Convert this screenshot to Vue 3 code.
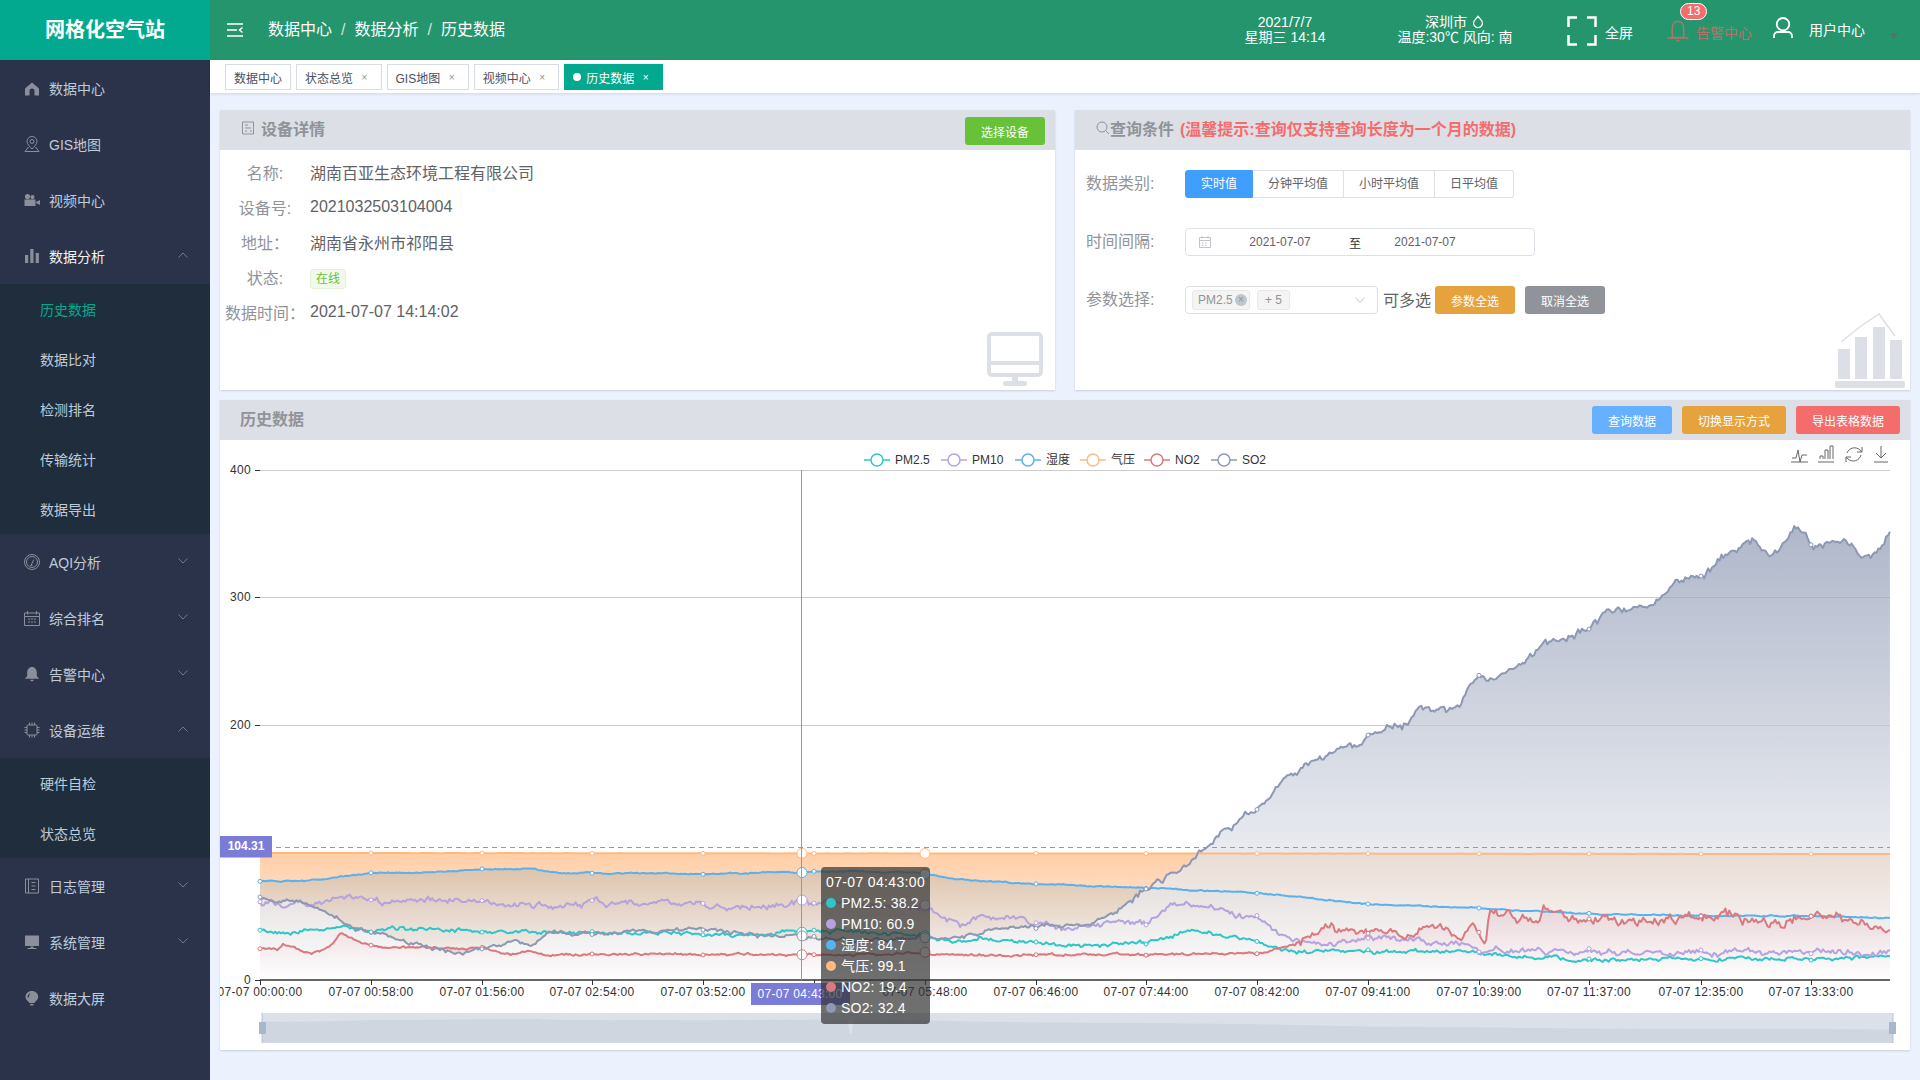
<script setup>
const menu = [
  { name: '数据中心', icon: 'home' },
  { name: 'GIS地图', icon: 'pin' },
  { name: '视频中心', icon: 'video' },
  {
    name: '数据分析', icon: 'bars', open: true, bright: true,
    children: ['历史数据', '数据比对', '检测排名', '传输统计', '数据导出'],
  },
  { name: 'AQI分析', icon: 'gauge', arrow: true },
  { name: '综合排名', icon: 'calendar', arrow: true },
  { name: '告警中心', icon: 'bell', arrow: true },
  {
    name: '设备运维', icon: 'chip', open: true,
    children: ['硬件自检', '状态总览'],
  },
  { name: '日志管理', icon: 'book', arrow: true },
  { name: '系统管理', icon: 'monitor', arrow: true },
  { name: '数据大屏', icon: 'bulb' },
]

const icons = {
  home: { fill: 'M8 2.500 15 8.500V15.500H10.500V11a2.500 2.500 0 0 0-5 0V15.500H1V8.500z' },
  pin: { line: 'M8 .5a5 5 0 0 1 5 5C13 8.300 10 10.800 8 13 6 10.800 3 8.300 3 5.500A5 5 0 0 1 8 .5zM8 3.500a2 2 0 1 0 0 4 2 2 0 0 0 0-4zM4.500 11 1 15.500h14L11.500 11' },
  video: { fill: 'M.5 7.500h11V14H.5zM12 10l4-2v5l-4-2zM3.500 2a2.600 2.600 0 1 1 0 5.200 2.600 2.600 0 0 1 0-5.200zM8.500 3a2.100 2.100 0 1 1 0 4.200 2.100 2.100 0 0 1 0-4.200z' },
  bars: { fill: 'M1 7h3.200v8H1zM6.300 1h3.200v14H6.300zM11.700 5h3.200v10h-3.200z' },
  gauge: { line: 'M8 .5a7.500 7.500 0 1 0 0 15 7.500 7.500 0 0 0 0-15zM8 2.500a5.500 5.500 0 1 0 0 11 5.500 5.500 0 0 0 0-11zM7 11.500 9.800 5.500M6.500 11.500h2' },
  calendar: { line: 'M.5 3h15v12.500H.5zM.5 6.500h15M3.500 1v3.500M12.500 1v3.500M4 9h2M7 9h2M10 9h2M4 12h2M7 12h2M10 12h2' },
  bell: { fill: 'M8 1c3 0 4.800 2.600 4.800 5.500V10l2.400 2.800H.8L3.200 10V6.500C3.200 3.600 5 1 8 1zM6.300 13.800h3.400a1.700 1.700 0 0 1-3.400 0z' },
  chip: { line: 'M4 3h8a1 1 0 0 1 1 1v8a1 1 0 0 1-1 1H4a1 1 0 0 1-1-1V4a1 1 0 0 1 1-1zM.5 5.500H3M.5 8H3M.5 10.500H3M13 5.500h2.500M13 8h2.500M13 10.500h2.500M5.500.5V3M8 .5V3M10.500.5V3M5.500 13v2.500M8 13v2.500M10.500 13v2.500' },
  book: { line: 'M1.500 1h13v14h-13zM4.500 1v14M7.500 4.500h4M7.500 8h4M7.500 11.500h4' },
  monitor: { fill: 'M1 1.500h14V12H1zM6.500 12.500h3V14h3v1h-9v-1h3z' },
  bulb: { fill: 'M7.800 1c3.700 0 6.400 2.600 6.400 5.800 0 2.400-1.700 4-3.200 5.200l-.5 1H5.300l-.5-1C3.300 10.800 1.500 9.200 1.500 6.800 1.500 3.600 4.200 1 7.800 1zM3.700 7.500c-.2-2 1-3.800 3-4.500-1 1.300-1.700 2.700-1.800 4.500zM5.800 14h4l-.6 1.500H6.400z' },
}

const tabs = [
  { name: '数据中心' },
  { name: '状态总览', close: true },
  { name: 'GIS地图', close: true },
  { name: '视频中心', close: true },
  { name: '历史数据', close: true, active: true },
]

const detailRows = [
  { label: '名称:', value: '湖南百亚生态环境工程有限公司' },
  { label: '设备号:', value: '2021032503104004' },
  { label: '地址：', value: '湖南省永州市祁阳县' },
  { label: '状态:', tag: '在线' },
  { label: '数据时间：', value: '2021-07-07 14:14:02' },
]

const dataTypes = ['实时值', '分钟平均值', '小时平均值', '日平均值']

// chart coordinates are page pixels, the svg viewBox starts at the panel corner
const plotLeft = 260
const plotRight = 1890
const plotBottom = 980
const minuteStep = 1.913

const legend = [
  { name: 'PM2.5', x: 864, color: '#2ec7c9' },
  { name: 'PM10', x: 941, color: '#b6a2de' },
  { name: '湿度', x: 1015, color: '#5ab1ef' },
  { name: '气压', x: 1080, color: '#ffb980' },
  { name: 'NO2', x: 1144, color: '#d87a80' },
  { name: 'SO2', x: 1211, color: '#8d98b3' },
]

const yTicks = [
  { label: '400', y: 470 },
  { label: '300', y: 597 },
  { label: '200', y: 725 },
  { label: '0', y: 980 },
]

const xTicks = [
  { x: 260, label: '07-07 00:00:00' },
  { x: 371, label: '07-07 00:58:00' },
  { x: 482, label: '07-07 01:56:00' },
  { x: 592, label: '07-07 02:54:00' },
  { x: 703, label: '07-07 03:52:00' },
  { x: 814, label: '' },
  { x: 925, label: '07-07 05:48:00' },
  { x: 1036, label: '07-07 06:46:00' },
  { x: 1146, label: '07-07 07:44:00' },
  { x: 1257, label: '07-07 08:42:00' },
  { x: 1368, label: '07-07 09:41:00' },
  { x: 1479, label: '07-07 10:39:00' },
  { x: 1589, label: '07-07 11:37:00' },
  { x: 1701, label: '07-07 12:35:00' },
  { x: 1811, label: '07-07 13:33:00' },
]

const rawSeries = [
  {
    name: 'PM2.5', color: '#2ec7c9', seed: 11, noise: () => 2.6, tip: '38.2',
    pts: [[260, 930], [283, 933], [341, 927], [371, 930], [428, 928], [482, 931], [592, 933], [703, 933], [748, 936], [802, 931], [850, 932], [925, 935], [962, 942], [980, 938], [1000, 942], [1036, 942], [1064, 947], [1146, 942], [1186, 930], [1257, 941], [1293, 952], [1368, 951], [1479, 953], [1550, 958], [1589, 960], [1701, 959], [1811, 958], [1890, 956]],
  },
  {
    name: 'PM10', color: '#b6a2de', seed: 23, noise: () => 4, tip: '60.9',
    pts: [[260, 902], [283, 905], [312, 903], [341, 896], [371, 900], [385, 903], [428, 898], [482, 902], [550, 907], [592, 903], [632, 902], [703, 905], [741, 908], [802, 902], [845, 903], [925, 907], [947, 917], [962, 925], [980, 915], [1036, 922], [1064, 929], [1114, 922], [1146, 922], [1168, 907], [1186, 901], [1229, 914], [1257, 920], [1286, 938], [1336, 944], [1368, 938], [1407, 940], [1457, 942], [1479, 953], [1500, 949], [1550, 951], [1589, 953], [1701, 953], [1811, 952], [1890, 952]],
  },
  {
    name: '湿度', color: '#5ab1ef', seed: 37, noise: () => 0.8, tip: '84.7',
    pts: [[260, 881], [307, 881], [371, 873], [443, 872], [482, 869], [530, 869], [559, 873], [608, 873], [705, 874], [802, 872], [850, 871], [923, 873], [957, 879], [986, 881], [1036, 884], [1146, 888], [1257, 893], [1368, 904], [1479, 908], [1589, 914], [1701, 916], [1811, 916], [1890, 918]],
  },
  {
    name: '气压', color: '#ffb980', seed: 41, noise: () => 0.1, tip: '99.1',
    pts: [[260, 853], [1890, 854]],
  },
  {
    name: 'NO2', color: '#d87a80', seed: 53, noise: (x) => (x > 1489 ? 7 : x > 1290 ? 5 : 1.6), tip: '19.4',
    pts: [[260, 949], [278, 950], [283, 944], [312, 955], [331, 945], [341, 933], [361, 943], [385, 947], [428, 948], [482, 948], [511, 955], [530, 952], [550, 955], [592, 954], [703, 954], [802, 955], [925, 953], [980, 955], [1257, 954], [1271, 951], [1300, 942], [1325, 927], [1357, 936], [1379, 927], [1414, 936], [1432, 923], [1461, 938], [1473, 923], [1486, 942], [1489, 912], [1514, 918], [1539, 925], [1543, 912], [1589, 916], [1657, 923], [1701, 914], [1786, 923], [1829, 914], [1890, 927]],
  },
  {
    name: 'SO2', color: '#8d98b3', seed: 67, noise: (x) => (x > 1130 ? 5 : 2.6), tip: '32.4',
    pts: [[260, 898], [312, 905], [336, 917], [356, 928], [385, 935], [414, 944], [458, 953], [482, 950], [511, 942], [530, 945], [550, 932], [592, 933], [703, 929], [724, 932], [748, 935], [802, 938], [850, 940], [925, 938], [961, 938], [1000, 928], [1036, 927], [1086, 925], [1114, 912], [1146, 888], [1186, 864], [1221, 834], [1257, 808], [1293, 773], [1336, 751], [1368, 737], [1407, 723], [1421, 711], [1454, 710], [1479, 678], [1507, 673], [1543, 645], [1589, 628], [1614, 610], [1657, 602], [1675, 578], [1707, 573], [1721, 556], [1754, 541], [1771, 558], [1796, 526], [1814, 547], [1846, 541], [1862, 561], [1879, 550], [1890, 528]],
  },
]

function makeRandom(seed) {
  let s = seed
  return () => {
    s = (s * 16807) % 2147483647
    return s / 2147483647 - 0.5
  }
}

function sample(pts, x) {
  let i = 0
  while (i < pts.length - 2 && pts[i + 1][0] < x) i++
  const [x0, y0] = pts[i]
  const [x1, y1] = pts[i + 1]
  return y0 + ((y1 - y0) * (x - x0)) / (x1 - x0)
}

const series = rawSeries.map((item) => {
  const rand = makeRandom(item.seed * 9973)
  const points = []
  let drift = 0
  for (let x = plotLeft; x <= plotRight; x += minuteStep) {
    drift = drift * 0.7 + rand() * item.noise(x)
    points.push([x, sample(item.pts, x) + drift + rand() * item.noise(x) * 0.7])
  }
  const line = points.map(([x, y], i) => `${i ? 'L' : 'M'}${x.toFixed(1)} ${y.toFixed(1)}`).join('')
  const top = Math.min(...points.map((p) => p[1]))
  const yAt = (x) => points[Math.round((x - plotLeft) / minuteStep)][1]
  return {
    ...item,
    line,
    area: `${line}L${plotRight} ${plotBottom}L${plotLeft} ${plotBottom}Z`,
    top,
    yAt,
    points,
  }
})

const markerTicks = xTicks.map((t) => t.x)
const hoverTicks = [802, 925]

// the slider shows a flattened copy of the humidity curve
const sliderLine = series[2].points
  .map(([x, y]) => {
    const spike = Math.abs(x - 849) < 2 ? 14 : 0
    return `L${(262 + ((x - plotLeft) / 1630) * 1631).toFixed(1)} ${(1020 + (y - 873) * 0.21 + spike).toFixed(1)}`
  })
  .join('')
const sliderArea = `M262 1043${sliderLine}L1893 1043Z`
</script>

<template>
  <div class="layout">
    <aside class="sidebar">
      <div class="logo">网格化空气站</div>
      <nav>
        <template v-for="item in menu" :key="item.name">
          <div class="menu-item" :class="{ bright: item.bright }">
            <svg class="menu-icon" viewBox="0 0 16 16">
              <path v-if="icons[item.icon].fill" :d="icons[item.icon].fill" class="icon-fill" />
              <path v-else :d="icons[item.icon].line" class="icon-line" />
            </svg>
            <span>{{ item.name }}</span>
            <svg v-if="item.arrow || item.open" class="menu-arrow" viewBox="0 0 10 6">
              <path :d="item.open ? 'M.5 5.500 5 1l4.500 4.500' : 'M.5.500 5 5 9.500.500'" />
            </svg>
          </div>
          <div v-if="item.children" class="sub-menu">
            <div
              v-for="child in item.children"
              :key="child"
              class="sub-item"
              :class="{ active: child === '历史数据' }"
            >
              {{ child }}
            </div>
          </div>
        </template>
      </nav>
    </aside>

    <div class="main">
      <header class="topbar">
        <svg class="hamburger" viewBox="0 0 16 14">
          <path d="M0 1h16M0 7h10M0 13h16M15.500 4.500 12.500 7l3 2.500" />
        </svg>
        <div class="breadcrumb">
          <span>数据中心</span><i>/</i><span>数据分析</span><i>/</i><span>历史数据</span>
        </div>
        <div class="top-right">
          <div class="date-block">
            <div>2021/7/7</div>
            <div>星期三 14:14</div>
          </div>
          <div class="weather-block">
            <div>
              深圳市
              <svg class="drop" viewBox="0 0 12 12">
                <path d="M6 1 9.500 5.500a3.800 3.800 0 1 1-7 0z" />
              </svg>
            </div>
            <div>温度:30℃ 风向: 南</div>
          </div>
          <div class="fullscreen">
            <svg viewBox="0 0 30 30">
              <path d="M10 1.500H1.500V11M20 1.500h8.500V11M10 28.500H1.500V19M20 28.500h8.500V19" />
            </svg>
            <span>全屏</span>
          </div>
          <div class="alarm">
            <svg viewBox="0 0 22 22">
              <path d="M11 1.500c-3.800 0-5.700 3.200-5.700 6.500v9.500h11.400V8c0-3.300-1.900-6.500-5.700-6.500zM.5 18h21M9.500 20.800h3" />
            </svg>
            <span>告警中心</span>
            <em class="badge">13</em>
          </div>
          <div class="user">
            <svg viewBox="0 0 20 21">
              <path d="M10 1a6 6 0 1 1 0 12.500A6 6 0 0 1 10 1zM1 21v-2a4 4 0 0 1 4-4h10a4 4 0 0 1 4 4v2" />
            </svg>
            <span>用户中心</span>
            <b class="caret"></b>
          </div>
        </div>
      </header>

      <div class="tabs">
        <div v-for="tab in tabs" :key="tab.name" class="tab" :class="{ active: tab.active }">
          <i v-if="tab.active" class="tab-dot"></i>
          {{ tab.name }}
          <span v-if="tab.close" class="tab-close">×</span>
        </div>
      </div>

      <div class="content">
        <div class="top-panels">
          <section class="panel">
            <div class="panel-head">
              <h3>
                <svg class="head-icon" viewBox="0 0 14 14">
                  <path d="M1.500 1h11v12h-11zM4 4h3M4 7h6M9 10h2M4 10h2" />
                </svg>
                设备详情
              </h3>
              <button class="btn btn-green btn-pick">选择设备</button>
            </div>
            <div class="detail-body">
              <div v-for="row in detailRows" :key="row.label" class="detail-row">
                <label>{{ row.label }}</label>
                <span v-if="row.tag" class="state-tag">{{ row.tag }}</span>
                <span v-else>{{ row.value }}</span>
              </div>
              <svg class="corner-monitor" viewBox="0 0 56 54">
                <rect x="2" y="2" width="52" height="41" rx="3" fill="none" stroke-width="4" />
                <path d="M2 31h52" fill="none" stroke-width="4" />
                <path d="M25 45h6v5h-6z" fill="#dcdfe6" stroke="none" />
                <rect x="16" y="49" width="24" height="5" rx="2.500" fill="#dcdfe6" stroke="none" />
              </svg>
            </div>
          </section>

          <section class="panel">
            <div class="panel-head">
              <h3 class="query-title">
                <svg class="search-icon" viewBox="0 0 14 14">
                  <path d="M6 1a5 5 0 1 0 0 10 5 5 0 0 0 0-10zM9.500 9.500 13 13" />
                </svg>
                查询条件
                <span class="tip">(温馨提示:查询仅支持查询长度为一个月的数据)</span>
              </h3>
            </div>
            <div class="query-body">
              <div class="query-row">
                <label>数据类别:</label>
                <div class="radio-group">
                  <span
                    v-for="(type, i) in dataTypes"
                    :key="type"
                    class="radio"
                    :class="{ active: i === 0 }"
                  >{{ type }}</span>
                </div>
              </div>
              <div class="query-row">
                <label>时间间隔:</label>
                <div class="date-range">
                  <svg class="calendar-icon" viewBox="0 0 14 14">
                    <path d="M1.500 2.500h11v10h-11zM1.500 5.500h11M4 1v2.500M10 1v2.500M4 8h1.500M7 8h1.500M4 10.500h1.500M7 10.500h1.500" />
                  </svg>
                  <span class="date-text">2021-07-07</span>
                  <span class="date-sep">至</span>
                  <span class="date-text">2021-07-07</span>
                </div>
              </div>
              <div class="query-row">
                <label>参数选择:</label>
                <div class="select-box">
                  <span class="select-tag first-tag">PM2.5<i class="tag-close">×</i></span>
                  <span class="select-tag">+ 5</span>
                  <svg class="select-arrow" viewBox="0 0 10 6">
                    <path d="M.5.500 5 5.500 9.500.500" />
                  </svg>
                </div>
                <span class="multi-hint">可多选</span>
                <button class="btn btn-orange">参数全选</button>
                <button class="btn btn-gray">取消全选</button>
              </div>
              <svg class="corner-chart" viewBox="0 0 70 76">
                <path d="M3 37h12v30H3zM20 25h12v42H20zM38 15h12v52H38zM55 28h12v39H55z" fill="#dcdfe6" />
                <rect x="0" y="69" width="70" height="7" rx="2" fill="#dcdfe6" />
                <path d="M6 30 26 14 44 2 60 24" fill="none" stroke="#dcdfe6" stroke-width="1.500" />
              </svg>
            </div>
          </section>
        </div>

        <section class="panel history">
          <div class="panel-head">
            <h3 class="history-title">历史数据</h3>
            <div class="head-actions">
              <button class="btn btn-blue">查询数据</button>
              <button class="btn btn-orange btn-wide">切换显示方式</button>
              <button class="btn btn-red btn-wide">导出表格数据</button>
            </div>
          </div>
          <div class="chart-wrap">
            <svg class="chart" viewBox="220 440 1690 610">
              <defs>
                <linearGradient
                  v-for="s in series"
                  :id="'fade-' + s.seed"
                  :key="s.seed"
                  gradientUnits="userSpaceOnUse"
                  x1="0"
                  x2="0"
                  :y1="s.top"
                  :y2="plotBottom"
                >
                  <stop offset="0" :stop-color="s.color" />
                  <stop offset="1" stop-color="#fff" />
                </linearGradient>
              </defs>

              <line
                v-for="t in yTicks.slice(0, 3)"
                :key="t.y"
                :x1="plotLeft"
                :x2="plotRight"
                :y1="t.y + 0.5"
                :y2="t.y + 0.5"
                stroke="#ccc"
              />

              <path
                v-for="s in series"
                :key="'area-' + s.seed"
                :d="s.area"
                :fill="`url(#fade-${s.seed})`"
                fill-opacity="0.7"
              />
              <path
                v-for="s in series"
                :key="'line-' + s.seed"
                :d="s.line"
                :stroke="s.color"
                stroke-width="2"
                fill="none"
                stroke-linejoin="round"
              />

              <g v-for="s in series" :key="'marks-' + s.seed">
                <circle
                  v-for="x in markerTicks"
                  :key="x"
                  :cx="x"
                  :cy="s.yAt(x)"
                  r="2"
                  fill="#fff"
                  :stroke="s.color"
                />
                <circle
                  v-for="x in hoverTicks"
                  :key="'h' + x"
                  :cx="x"
                  :cy="s.yAt(x)"
                  r="5"
                  fill="#fff"
                  :stroke="s.color"
                />
              </g>

              <!-- axes -->
              <line :x1="plotLeft" :x2="plotRight" :y1="plotBottom" :y2="plotBottom" stroke="#333" stroke-width="1.500" />
              <g v-for="t in yTicks" :key="'yl' + t.y">
                <line x1="255" :x2="plotLeft" :y1="t.y + 0.5" :y2="t.y + 0.5" stroke="#333" />
                <text x="251" :y="t.y + 4" text-anchor="end" class="axis-text wide-text">{{ t.label }}</text>
              </g>
              <g v-for="t in xTicks" :key="'xl' + t.x">
                <line :x1="t.x + 0.5" :x2="t.x + 0.5" :y1="plotBottom" :y2="plotBottom + 5" stroke="#333" />
                <text :x="t.x" y="996" text-anchor="middle" class="axis-text wide-text">{{ t.label }}</text>
              </g>

              <!-- average mark line -->
              <line x1="276" :x2="plotRight" y1="847.5" y2="847.5" stroke="#999" stroke-dasharray="5 4" />
              <rect x="220" y="836" width="52" height="21.500" fill="#7b7bd8" />
              <text x="246" y="850" text-anchor="middle" class="mark-text">104.31</text>

              <!-- crosshair -->
              <line x1="801.5" x2="801.5" y1="470" :y2="plotBottom" stroke="#999" />
              <rect x="751" y="983" width="99" height="22" fill="#7b7bd8" />
              <text x="800" y="998" text-anchor="middle" class="pointer-text wide-text">07-07 04:43:00</text>

              <!-- legend -->
              <g v-for="l in legend" :key="l.name">
                <path :d="`M${l.x} 460h26`" :stroke="l.color" stroke-width="1.500" />
                <circle :cx="l.x + 13" cy="460" r="6" fill="#fff" :stroke="l.color" stroke-width="1.500" />
                <text :x="l.x + 31" y="464" class="axis-text">{{ l.name }}</text>
              </g>

              <!-- toolbox -->
              <g class="toolbox">
                <path d="M1791 462h17M1792 458h4l2-8 2 12 2-7h5" />
                <path d="M1818 462h16M1820 459v-3h3v3M1825 459v-9h3v9M1830 459v-13h3v13" />
                <path d="M1847 453a8 8 0 0 1 13-3l2 2M1861 455a8 8 0 0 1-13 4l-2-2M1862 447v5h-5M1846 462v-5h5" />
                <path d="M1881 446v12M1876 453l5 5 5-5M1874 462h14" />
              </g>

              <!-- slider -->
              <rect x="262" y="1013" width="1631" height="30" fill="#dce1e9" />
              <path :d="sliderArea" fill="#cfd6e0" />
              <path d="M262 1013v30M1893 1013v30" stroke="#b9c4d4" />
              <g class="slider-handle">
                <rect x="259" y="1022" width="7" height="12" />
                <rect x="1889" y="1022" width="7" height="12" />
              </g>
            </svg>

            <div class="chart-tip">
              <div class="tip-time">07-07 04:43:00</div>
              <div v-for="s in series" :key="s.name" class="tip-row">
                <i :style="{ background: s.color }"></i>{{ s.name }}: {{ s.tip }}
              </div>
            </div>
          </div>
        </section>
      </div>
    </div>
  </div>
</template>

<style>
html,
body {
  margin: 0;
  overflow: hidden;
}
</style>

<style scoped>
.layout {
  display: flex;
  width: 1920px;
  height: 1080px;
  overflow: hidden;
  font-family: "Liberation Sans", "Noto Sans CJK SC", sans-serif;
  background: #ecf2fd;
}

.sidebar {
  width: 210px;
  flex-shrink: 0;
  background: #2b334a;
  color: #bfcbd9;
  font-size: 14px;
}

.logo {
  height: 60px;
  line-height: 60px;
  text-align: center;
  background: #02a98e;
  color: #fff;
  font-size: 20px;
  font-weight: 700;
}

.menu-item {
  position: relative;
  display: flex;
  align-items: center;
  height: 56px;
  padding-left: 24px;
}

.menu-item.bright {
  color: #f4f4f5;
}

.menu-icon {
  width: 16px;
  height: 16px;
  margin-right: 9px;
}

.icon-fill {
  fill: #8b8f9b;
  fill-rule: evenodd;
}

.icon-line {
  fill: none;
  stroke: #8b8f9b;
  stroke-width: 1;
}

.menu-arrow {
  position: absolute;
  right: 22px;
  top: 24px;
  width: 10px;
  height: 6px;
  fill: none;
  stroke: #6f7688;
}

.sub-menu {
  background: #1f2d3d;
}

.sub-item {
  height: 50px;
  line-height: 52px;
  padding-left: 40px;
}

.sub-item.active {
  color: #02a98e;
}

.main {
  flex: 1;
  min-width: 0;
  display: flex;
  flex-direction: column;
}

.topbar {
  display: flex;
  align-items: center;
  height: 60px;
  flex-shrink: 0;
  background: #25956d;
  color: #fff;
}

.hamburger {
  width: 16px;
  height: 14px;
  margin-left: 17px;
  fill: none;
  stroke: #fff;
  stroke-width: 1.500;
}

.breadcrumb {
  margin-left: 25px;
  font-size: 16px;
  line-height: 60px;
}

.breadcrumb i {
  margin: 0 9px;
  font-style: normal;
  color: #cfe6dc;
}

.top-right {
  display: flex;
  align-items: flex-start;
  height: 60px;
  margin-left: auto;
  padding-right: 55px;
  font-size: 14px;
  line-height: 20px;
}

.date-block,
.weather-block {
  margin-top: 15px;
  line-height: 15px;
  text-align: center;
  white-space: nowrap;
}

.date-block {
  width: 100px;
}

.weather-block {
  width: 130px;
  margin-left: 55px;
}

.drop {
  width: 14px;
  height: 14px;
  vertical-align: -2px;
  fill: none;
  stroke: #fff;
}

.fullscreen {
  display: flex;
  gap: 8px;
  margin: 16px 0 0 47px;
}

.fullscreen svg {
  width: 30px;
  height: 30px;
  fill: none;
  stroke: #fff;
  stroke-width: 2.500;
}

.fullscreen span {
  margin-top: 7px;
}

.alarm {
  position: relative;
  display: flex;
  gap: 7px;
  margin: 20px 0 0 34px;
  color: #b0756a;
}

.alarm svg {
  width: 22px;
  height: 22px;
  fill: none;
  stroke: #b0756a;
  stroke-width: 1.500;
}

.alarm span {
  margin-top: 3px;
}

.badge {
  position: absolute;
  left: 13px;
  top: -17px;
  height: 15px;
  line-height: 15px;
  padding: 0 6px;
  border: 1px solid #fff;
  border-radius: 10px;
  background: #f56c6c;
  color: #fff;
  font-size: 12px;
  font-style: normal;
}

.user {
  position: relative;
  display: flex;
  gap: 16px;
  margin: 17px 0 0 21px;
}

.user svg {
  width: 20px;
  height: 21px;
  fill: none;
  stroke: #fff;
  stroke-width: 1.800;
}

.user span {
  margin-top: 3px;
}

.caret {
  position: absolute;
  left: 117px;
  top: 16px;
  border: 4px solid transparent;
  border-top: 6px solid #5a6f69;
}

.tabs {
  display: flex;
  gap: 5px;
  height: 33px;
  flex-shrink: 0;
  padding: 4px 0 0 15px;
  box-sizing: border-box;
  background: #fff;
  box-shadow: 0 1px 3px rgba(0, 0, 0, 0.12);
}

.tab {
  display: flex;
  align-items: center;
  height: 26px;
  padding: 0 8px;
  box-sizing: border-box;
  border: 1px solid #d8dce5;
  background: #fff;
  color: #495060;
  font-size: 12px;
}

.tab.active {
  border-color: #02a98e;
  background: #02a98e;
  color: #fff;
}

.tab-dot {
  width: 8px;
  height: 8px;
  margin-right: 5px;
  border-radius: 50%;
  background: #fff;
}

.tab-close {
  width: 16px;
  margin-left: 3.500px;
  font-size: 10px;
  text-align: center;
  color: #909399;
}

.tab.active .tab-close {
  color: #fff;
}

.content {
  flex: 1;
  min-height: 0;
  display: flex;
  flex-direction: column;
  gap: 10px;
  padding: 17px 10px 0;
}

.top-panels {
  display: grid;
  grid-template-columns: 1fr 1fr;
  gap: 20px;
}

.panel {
  background: #fff;
  box-shadow: 0 1px 2px rgba(0, 0, 0, 0.15);
}

.panel-head {
  display: flex;
  align-items: center;
  justify-content: space-between;
  height: 40px;
  background: #dcdfe6;
}

.panel-head h3 {
  display: flex;
  align-items: center;
  margin: 0;
  padding: 0 0 5px 21px;
  font-size: 16px;
  font-weight: 700;
  color: #909399;
}

.head-icon {
  width: 14px;
  height: 14px;
  margin-right: 6px;
  fill: none;
  stroke: #909399;
}

.search-icon {
  width: 14px;
  height: 14px;
  fill: none;
  stroke: #909399;
}

.tip {
  margin-left: 6px;
  color: #f56c6c;
  font-weight: 700;
}

.history-title {
  padding-left: 20px !important;
}

.btn {
  width: 80px;
  height: 28px;
  padding: 0;
  border: none;
  border-radius: 3px;
  color: #fff;
  font-family: inherit;
  font-size: 12px;
}

.btn-wide {
  width: 104px;
}

.btn-pick {
  margin: 2px 10px 0 0;
}

.btn-green {
  background: #67c23a;
}

.btn-orange {
  background: #e6a23c;
}

.btn-gray {
  background: #909399;
}

.btn-blue {
  background: #66b1ff;
}

.btn-red {
  background: #f56c6c;
}

.head-actions {
  display: flex;
  gap: 10px;
  margin-right: 10px;
}

.detail-body {
  position: relative;
  height: 240px;
  padding: 4px 0 0 5px;
  box-sizing: border-box;
  font-size: 16px;
  color: #606266;
}

.detail-row {
  display: flex;
  align-items: center;
  gap: 5px;
  height: 35px;
}

.detail-row label {
  width: 80px;
  text-align: center;
  color: #909399;
}

.state-tag {
  width: 36px;
  height: 20px;
  line-height: 18px;
  margin-top: 5px;
  box-sizing: border-box;
  border: 1px solid #e1f3d8;
  border-radius: 3px;
  background: #f0f9eb;
  color: #67c23a;
  font-size: 12px;
  text-align: center;
}

.corner-monitor {
  position: absolute;
  right: 12px;
  bottom: 4px;
  width: 56px;
  height: 54px;
  stroke: #dcdfe6;
}

.query-body {
  position: relative;
  height: 240px;
  padding: 20px 0 0 11px;
  box-sizing: border-box;
  font-size: 16px;
  color: #909399;
}

.query-row {
  display: flex;
  align-items: center;
  height: 28px;
  margin-bottom: 30px;
}

.query-row label {
  width: 99px;
  padding-bottom: 5px;
}

.radio-group {
  display: flex;
}

.radio {
  height: 28px;
  line-height: 26px;
  padding: 0 15px;
  box-sizing: border-box;
  border: 1px solid #dcdfe6;
  border-left: none;
  background: #fff;
  color: #606266;
  font-size: 12px;
}

.radio:first-child {
  border-radius: 3px 0 0 3px;
  border-left: 1px solid #dcdfe6;
}

.radio:last-child {
  border-radius: 0 3px 3px 0;
}

.radio.active {
  border-color: #409eff;
  background: #409eff;
  color: #fff;
}

.date-range {
  display: flex;
  align-items: center;
  width: 350px;
  height: 28px;
  box-sizing: border-box;
  border: 1px solid #dcdfe6;
  border-radius: 4px;
  font-size: 12px;
  color: #606266;
}

.calendar-icon {
  width: 14px;
  height: 14px;
  margin-left: 12px;
  fill: none;
  stroke: #c0c4cc;
}

.date-text {
  width: 120px;
  margin-left: 8px;
  text-align: center;
}

.date-sep {
  width: 20px;
  margin-left: 5px;
  text-align: center;
  color: #303133;
}

.date-sep + .date-text {
  margin-left: 0;
}

.select-box {
  position: relative;
  display: flex;
  align-items: center;
  gap: 7px;
  width: 193px;
  height: 28px;
  padding-left: 6px;
  box-sizing: border-box;
  border: 1px solid #dcdfe6;
  border-radius: 4px;
}

.select-tag {
  display: flex;
  align-items: center;
  height: 20px;
  padding: 0 7px;
  box-sizing: border-box;
  border: 1px solid #e9e9eb;
  border-radius: 3px;
  background: #f4f4f5;
  color: #909399;
  font-size: 12px;
  white-space: nowrap;
}

.first-tag {
  justify-content: space-between;
  width: 58px;
  padding: 0 2px 0 5px;
}

.tag-close {
  display: inline-block;
  width: 12px;
  height: 12px;
  line-height: 12px;
  border-radius: 50%;
  background: #c0c4cc;
  color: #909399;
  font-size: 10px;
  font-style: normal;
  text-align: center;
}

.select-arrow {
  position: absolute;
  right: 12px;
  top: 10px;
  width: 10px;
  height: 6px;
  fill: none;
  stroke: #c0c4cc;
}

.multi-hint {
  margin: 0 4px 0 5px;
  padding-bottom: 2px;
  color: #606266;
}

.query-row .btn-gray {
  margin-left: 10px;
}

.corner-chart {
  position: absolute;
  right: 5px;
  bottom: 2px;
  width: 70px;
  height: 76px;
}

.history {
  width: 1690px;
  height: 650px;
}

.chart-wrap {
  position: relative;
  height: 610px;
}

.chart {
  display: block;
  width: 1690px;
  height: 610px;
}

.axis-text {
  font-size: 12px;
  fill: #333;
}

.wide-text {
  letter-spacing: 0.3px;
}

.mark-text {
  font-size: 12px;
  font-weight: 700;
  fill: #fff;
}

.pointer-text {
  font-size: 12px;
  fill: #fff;
}

.toolbox path {
  fill: none;
  stroke: #666;
}

.slider-handle rect {
  fill: #a9b7cc;
}

.chart-tip {
  position: absolute;
  left: 601px;
  top: 427px;
  width: 109px;
  height: 157px;
  padding: 5px;
  box-sizing: border-box;
  border-radius: 4px;
  background: rgba(50, 50, 50, 0.7);
  color: #fff;
  font-size: 14px;
  line-height: 21px;
  white-space: nowrap;
}

.tip-time {
  letter-spacing: 0.35px;
}

.tip-row {
  letter-spacing: 0.2px;
}

.tip-row i {
  display: inline-block;
  width: 10px;
  height: 10px;
  margin-right: 5px;
  border-radius: 50%;
}
</style>
